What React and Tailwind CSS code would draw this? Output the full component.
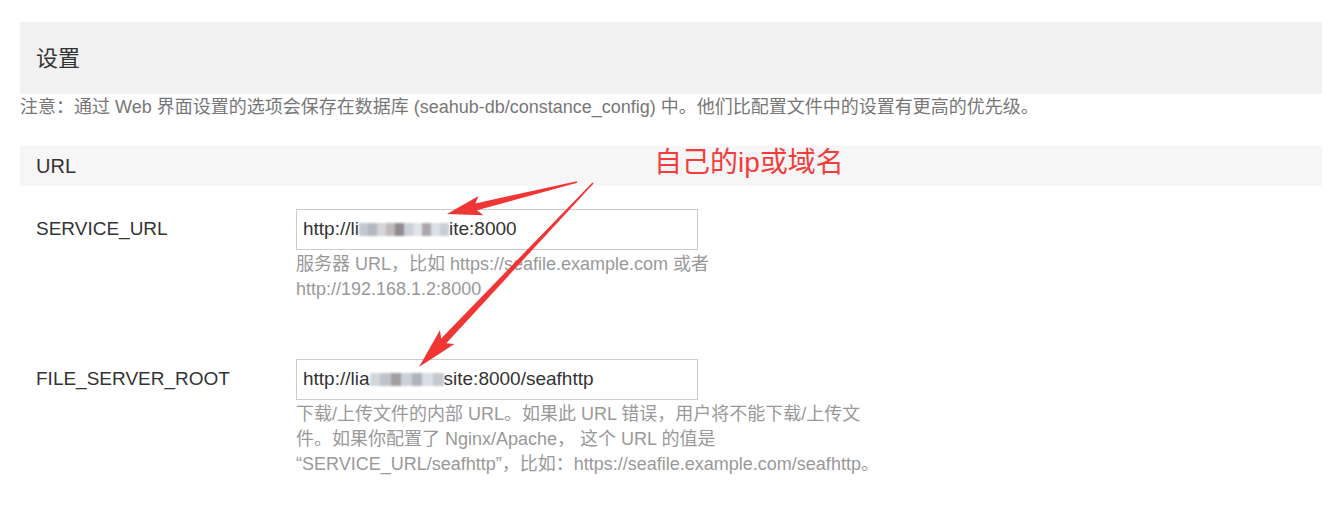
import React from "react";

const font = { fontFamily: '"Liberation Sans", "Noto Sans CJK SC", sans-serif' };

function arrowPoints(x1, y1, x2, y2, w0, w1, len, head) {
  const dx = x2 - x1;
  const dy = y2 - y1;
  const d = Math.hypot(dx, dy);
  const ux = dx / d;
  const uy = dy / d;
  const nx = -uy;
  const ny = ux;
  const bx = x2 - ux * len;
  const by = y2 - uy * len;
  const barb = 5;
  const pts = [
    [x1 + nx * w0, y1 + ny * w0],
    [bx + nx * w1, by + ny * w1],
    [bx - ux * barb + nx * head, by - uy * barb + ny * head],
    [x2, y2],
    [bx - ux * barb - nx * head, by - uy * barb - ny * head],
    [bx - nx * w1, by - ny * w1],
    [x1 - nx * w0, y1 - ny * w0],
  ];
  return pts.map((p) => p.map((v) => v.toFixed(1)).join(",")).join(" ");
}

function Mosaic({ width, colors }) {
  return (
    <span className="inline-flex h-[16px] items-center blur-[1.2px]" style={{ width }}>
      {colors.map((c, i) => (
        <span key={i} className="h-[13px] flex-1" style={{ backgroundColor: c }} />
      ))}
    </span>
  );
}

function Field({ label, before, blurW, blurColors, after, help }) {
  return (
    <div className="flex">
      <div className="flex h-[41px] w-[276px] items-center pl-4 text-[19px] text-[#333]">{label}</div>
      <div>
        <div className="flex h-[41px] w-[402px] items-center border border-[#ccc] px-[6px] text-[19px] text-[#333]">
          <span>{before}</span>
          <Mosaic width={blurW} colors={blurColors} />
          <span>{after}</span>
        </div>
        <div className="mt-[2px] text-[18px] leading-[25px] text-[#999]">{help}</div>
      </div>
    </div>
  );
}

export default function App() {
  return (
    <div className="relative min-h-[532px] bg-white pl-5 pr-4" style={font}>
      <div className="pt-[22px]">
        <div className="flex h-[72px] items-center bg-[#f1f1f1] pl-4 text-[22px] text-[#333]">设置</div>
      </div>
      <p className="mt-[1px] text-[18px] leading-[24px] text-[#777]">
        注意：通过 Web 界面设置的选项会保存在数据库 (seahub-db/constance_config) 中。他们比配置文件中的设置有更高的优先级。
      </p>

      <div className="mt-[27px] flex h-[40px] items-center bg-[#f6f6f6] pl-4 text-[20px] text-[#333]">URL</div>

      <div className="mt-[23px] flex flex-col gap-[57px]">
        <Field
          label="SERVICE_URL"
          before="http://li"
          blurW={90}
          blurColors={["#c3c7ce", "#b2b8c1", "#d4d4d9", "#bfb9bc", "#918a8f", "#cbd0d7", "#dfe2e7", "#aca6ac", "#dbe0e6", "#c9ced4"]}
          after="ite:8000"
          help={
            <>
              服务器 URL，比如 https://seafile.example.com 或者
              <br />
              http://192.168.1.2:8000
            </>
          }
        />
        <Field
          label="FILE_SERVER_ROOT"
          before="http://lia"
          blurW={74}
          blurColors={["#d2d7dc", "#bfc4cb", "#a29ea2", "#cbd0d6", "#b0b4bc", "#d9dfe6", "#c4c9d0"]}
          after="site:8000/seafhttp"
          help={
            <>
              下载/上传文件的内部 URL。如果此 URL 错误，用户将不能下载/上传文
              <br />
              件。如果你配置了 Nginx/Apache， 这个 URL 的值是
              <br />
              “SERVICE_URL/seafhttp”，比如：https://seafile.example.com/seafhttp。
            </>
          }
        />
      </div>

      <div className="absolute left-[654px] top-[146px] text-[28px] leading-[34px] text-[#f23d3d]">自己的ip或域名</div>

      <svg className="pointer-events-none absolute left-0 top-0" width="1338" height="532">
        <polygon points={arrowPoints(577, 182, 447, 214, 0.8, 3.5, 30, 10)} fill="#f03535" />
        <polygon points={arrowPoints(593, 183, 419, 367, 0.8, 3.5, 36, 10)} fill="#f03535" />
      </svg>
    </div>
  );
}
